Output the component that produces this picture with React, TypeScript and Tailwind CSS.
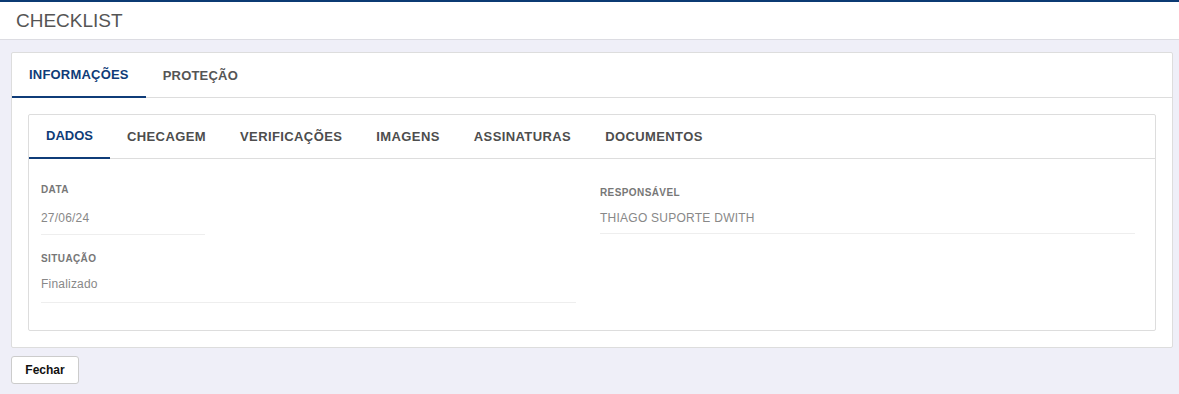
import { useState } from 'react';

const outerTabs = ['INFORMAÇÕES', 'PROTEÇÃO'];
const innerTabs = ['DADOS', 'CHECAGEM', 'VERIFICAÇÕES', 'IMAGENS', 'ASSINATURAS', 'DOCUMENTOS'];

export default function App() {
  const [outer, setOuter] = useState(0);
  const [inner, setInner] = useState(0);

  return (
    <div className="min-h-[394px] bg-[#efeff8] pb-[10px] font-['Liberation_Sans',Arial,sans-serif]">
      <div className="h-[40px] bg-white border-t-2 border-t-[#0b3a73] border-b border-b-[#dcdce2] flex items-center px-4">
        <h1 className="text-[19px] leading-none text-[#555]">CHECKLIST</h1>
      </div>

      <div className="mt-[12px] ml-[11px] mr-[6px] bg-white border border-[#dddddd] rounded-[2px]">
        <div className="flex border-b border-[#dddddd]">
          {outerTabs.map((t, i) => (
            <button
              key={t}
              onClick={() => setOuter(i)}
              className={`h-[45px] px-[17px] text-[13px] font-bold tracking-[0.2px] -mb-px ${
                outer === i ? 'text-[#0f3c78] border-b-2 border-[#0f3c78]' : 'text-[#555]'
              }`}
            >
              {t}
            </button>
          ))}
        </div>

        <div className="p-4">
          <div className="border border-[#dddddd] rounded-[2px]">
            <div className="flex border-b border-[#dddddd]">
              {innerTabs.map((t, i) => (
                <button
                  key={t}
                  onClick={() => setInner(i)}
                  className={`h-[44px] px-[17px] text-[13px] font-bold -mb-px ${
                    t === 'DADOS' ? 'tracking-normal' : 'tracking-[0.4px]'
                  } ${inner === i ? 'text-[#0f3c78] border-b-2 border-[#0f3c78]' : 'text-[#4d4d4d]'}`}
                >
                  {t}
                </button>
              ))}
            </div>

            <div className="grid grid-cols-2 gap-6 pl-3 pr-5">
              <div className="pt-[25px] pb-[27px]">
                <div className="w-[164px] pb-[8px] border-b border-[#eeeeee]">
                  <p className="text-[10px] leading-[12px] font-bold tracking-[0.4px] text-[#777]">DATA</p>
                  <p className="mt-[14px] text-[12px] leading-[16px] tracking-[0.2px] text-[#888]">27/06/24</p>
                </div>
                <div className="mt-[18px] pb-[10px] border-b border-[#eeeeee]">
                  <p className="text-[10px] leading-[12px] font-bold tracking-[0.4px] text-[#777]">SITUAÇÃO</p>
                  <p className="mt-[11px] text-[12px] leading-[16px] tracking-[0.2px] text-[#888]">Finalizado</p>
                </div>
              </div>
              <div className="pt-[28px]">
                <div className="pb-[7px] border-b border-[#eeeeee]">
                  <p className="text-[10px] leading-[12px] font-bold tracking-[0.4px] text-[#777]">RESPONSÁVEL</p>
                  <p className="mt-[11px] text-[12px] leading-[16px] tracking-[0.25px] text-[#888]">THIAGO SUPORTE DWITH</p>
                </div>
              </div>
            </div>
          </div>
        </div>
      </div>

      <button className="mt-[8px] ml-[11px] h-[28px] w-[68px] bg-white border border-[#cccccc] rounded-[3px] text-[12px] font-bold text-[#111]">
        Fechar
      </button>
    </div>
  );
}
